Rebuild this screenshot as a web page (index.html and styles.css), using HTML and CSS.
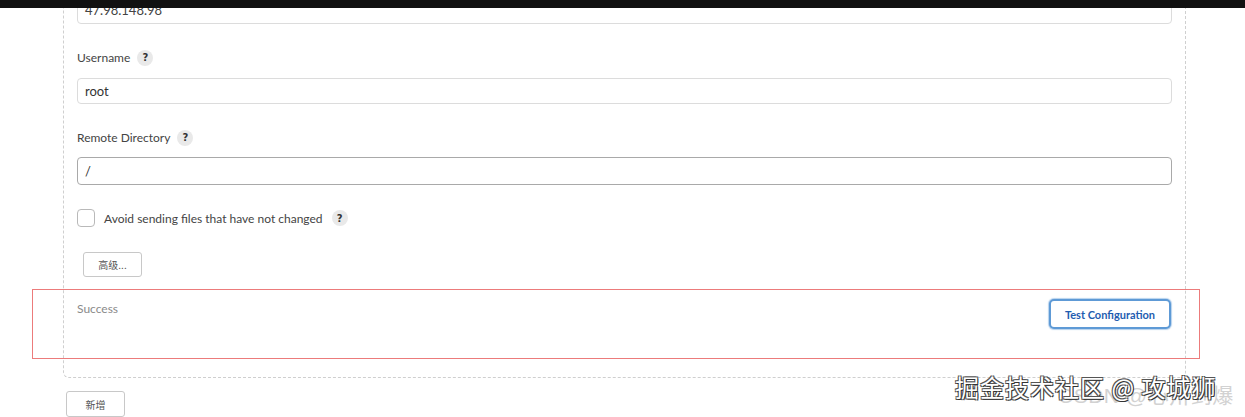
FILE: index.html
```html
<!DOCTYPE html>
<html lang="en">
<head>
<meta charset="utf-8">
<title>Publish over SSH</title>
<link rel="stylesheet" href="styles.css">
</head>
<body>
<div class="topbar"></div>
<main class="page">
  <section class="card">
    <div class="input first">47.98.148.98</div>

    <div class="label">Username <span class="help">?</span></div>
    <div class="input">root</div>

    <div class="label">Remote Directory <span class="help">?</span></div>
    <div class="input focused">/</div>

    <label class="check-row">
      <span class="checkbox"></span>
      <span class="check-text">Avoid sending files that have not changed</span>
      <span class="help">?</span>
    </label>

    <button class="btn adv">高级...</button>

    <div class="test-row">
      <span class="status">Success</span>
      <button class="btn-test">Test Configuration</button>
    </div>
  </section>
  <button class="btn add">新增</button>
</main>
<div class="highlight"></div>
<div class="watermark">
  <span class="wm-back">CSDN @心卅到爆</span>
  <span class="wm-front">掘金技术社区 @ 攻城狮</span>
</div>
</body>
</html>
```

FILE: styles.css
```css
html, body {
  margin: 0;
  padding: 0;
  background: #fff;
  overflow: hidden;
}
body {
  width: 1245px;
  height: 417px;
  font-family: Lato, "Noto Sans", "Noto Sans CJK SC", sans-serif;
  color: #333;
  position: relative;
}
.topbar {
  position: absolute;
  left: 0;
  top: 0;
  width: 1245px;
  height: 8px;
  background: #111;
  z-index: 5;
}
.page {
  padding-left: 63px;
  display: flex;
  flex-direction: column;
  align-items: flex-start;
}
.card {
  box-sizing: border-box;
  width: 1123px;
  margin-top: -24px;
  padding: 20px 13px 48px 13px;
  border: 1px dashed #cfcfcf;
  border-radius: 6px;
  display: flex;
  flex-direction: column;
  align-items: stretch;
}
.input {
  box-sizing: border-box;
  height: 26px;
  border: 1px solid #dcdcdc;
  border-radius: 4px;
  padding-left: 7px;
  font-size: 13px;
  line-height: 24px;
  color: #333;
}
.input.first {
  height: 27px;
  line-height: 25px;
  color: #444;
}
.input.focused {
  height: 28px;
  line-height: 26px;
  border-color: #a9a9a9;
}
.label {
  margin-top: 24px;
  height: 20px;
  line-height: 20px;
  font-size: 12px;
  color: #444;
  display: flex;
  align-items: center;
}
.label + .input {
  margin-top: 10px;
}
.label + .input.focused {
  margin-top: 9px;
}
.help {
  display: inline-flex;
  align-items: center;
  justify-content: center;
  width: 16px;
  height: 16px;
  border-radius: 50%;
  background: #e9e9e9;
  color: #333;
  font-size: 10px;
  font-weight: 700;
  margin-left: 7px;
  font-family: "DejaVu Sans", sans-serif;
}
.check-row {
  margin-top: 24px;
  height: 18px;
  display: flex;
  align-items: center;
  font-size: 12px;
  color: #444;
}
.checkbox {
  box-sizing: border-box;
  width: 18px;
  height: 18px;
  border: 1px solid #b9b9b9;
  border-radius: 4px;
  margin-right: 9px;
}
.check-row .help {
  margin-left: 9px;
}
.btn {
  box-sizing: border-box;
  background: #fff;
  border: 1px solid #c8c8c8;
  border-radius: 3px;
  font-family: "Noto Sans CJK SC", sans-serif;
  font-size: 10px;
  color: #555;
  padding: 0;
  cursor: pointer;
}
.btn.adv {
  align-self: flex-start;
  margin-top: 25px;
  margin-left: 6px;
  width: 59px;
  height: 25px;
}
.test-row {
  margin-top: 22px;
  display: flex;
  justify-content: space-between;
  align-items: flex-start;
}
.status {
  font-size: 12px;
  line-height: 20px;
  margin-top: 0;
  color: #8a8a8a;
}
.btn-test {
  box-sizing: border-box;
  width: 122px;
  height: 30px;
  margin-right: 1px;
  background: #fff;
  border: 2px solid #5e9ad6;
  border-radius: 5px;
  box-shadow: 0 0 1px 1px rgba(94, 154, 214, 0.45);
  font-family: Lato, "Noto Sans", sans-serif;
  font-size: 11px;
  font-weight: 700;
  color: #1f5db0;
  padding: 0;
}
.btn.add {
  margin-top: 13px;
  margin-left: 3px;
  width: 59px;
  height: 26px;
}
.highlight {
  position: absolute;
  left: 32px;
  top: 289px;
  width: 1166px;
  height: 68px;
  border: 1px solid #ec7b7b;
  pointer-events: none;
}
.watermark {
  position: absolute;
  left: 955px;
  top: 370px;
  width: 290px;
  height: 47px;
  pointer-events: none;
}
.wm-back {
  position: absolute;
  left: 103px;
  top: 9px;
  font-family: "Liberation Sans", "Noto Sans CJK SC", sans-serif;
  font-size: 21px;
  color: #d2d2d2;
  white-space: nowrap;
  letter-spacing: 0.5px;
}
.wm-front {
  position: absolute;
  left: 0;
  top: 0;
  font-family: "Noto Sans CJK SC", sans-serif;
  font-size: 24px;
  line-height: 34px;
  letter-spacing: 1px;
  color: #fff;
  white-space: nowrap;
  text-shadow: 1px 1px 0 #333, -1px -1px 0 #555, 1px -1px 0 #555, -1px 1px 0 #555;
}
```
